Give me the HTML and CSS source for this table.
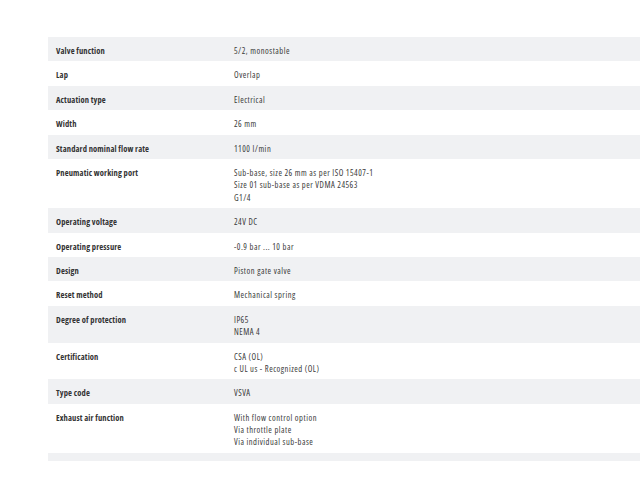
FILE: index.html
```html
<!DOCTYPE html>
<html lang="en">
<head>
<meta charset="utf-8">
<title>Technical data</title>
<link rel="stylesheet" href="styles.css">
</head>
<body>
<div class="page">
  <div class="specs">
    <div class="row"><div class="label">Valve function</div><div class="value">5/2, monostable</div></div>
    <div class="row"><div class="label">Lap</div><div class="value">Overlap</div></div>
    <div class="row"><div class="label">Actuation type</div><div class="value">Electrical</div></div>
    <div class="row"><div class="label">Width</div><div class="value">26 mm</div></div>
    <div class="row"><div class="label">Standard nominal flow rate</div><div class="value">1100 l/min</div></div>
    <div class="row"><div class="label">Pneumatic working port</div><div class="value">Sub-base, size 26 mm as per ISO 15407-1<br>Size 01 sub-base as per VDMA 24563<br>G1/4</div></div>
    <div class="row"><div class="label">Operating voltage</div><div class="value">24V DC</div></div>
    <div class="row"><div class="label">Operating pressure</div><div class="value">-0.9 bar ... 10 bar</div></div>
    <div class="row"><div class="label">Design</div><div class="value">Piston gate valve</div></div>
    <div class="row"><div class="label">Reset method</div><div class="value">Mechanical spring</div></div>
    <div class="row"><div class="label">Degree of protection</div><div class="value">IP65<br>NEMA 4</div></div>
    <div class="row"><div class="label">Certification</div><div class="value">CSA (OL)<br>c UL us - Recognized (OL)</div></div>
    <div class="row"><div class="label">Type code</div><div class="value">VSVA</div></div>
    <div class="row"><div class="label">Exhaust air function</div><div class="value">With flow control option<br>Via throttle plate<br>Via individual sub-base</div></div>
    <div class="row row-empty"></div>
  </div>
</div>
</body>
</html>
```

FILE: styles.css
```css
html, body {
  margin: 0;
  padding: 0;
  background: #ffffff;
}

body {
  font-family: "Open Sans", "Noto Sans", sans-serif;
  font-size: 8.5px;
  line-height: 12.25px;
  color: #333333;
}

.page {
  padding: 37px 0 0 48px;
}

.specs {
  display: flex;
  flex-direction: column;
}

.row {
  display: grid;
  grid-template-columns: 178px 1fr;
}

.row:nth-child(odd) {
  background: #f0f1f3;
}

.label,
.value {
  padding: 8px 8px 4.2px;
}

.label {
  font-weight: 700;
  font-stretch: 75%;
  letter-spacing: 0.13px;
  color: #333333;
}

.value {
  font-stretch: 75%;
  letter-spacing: 0.5px;
  color: #3a3a3a;
}

.row-empty {
  height: 8px;
}
```
